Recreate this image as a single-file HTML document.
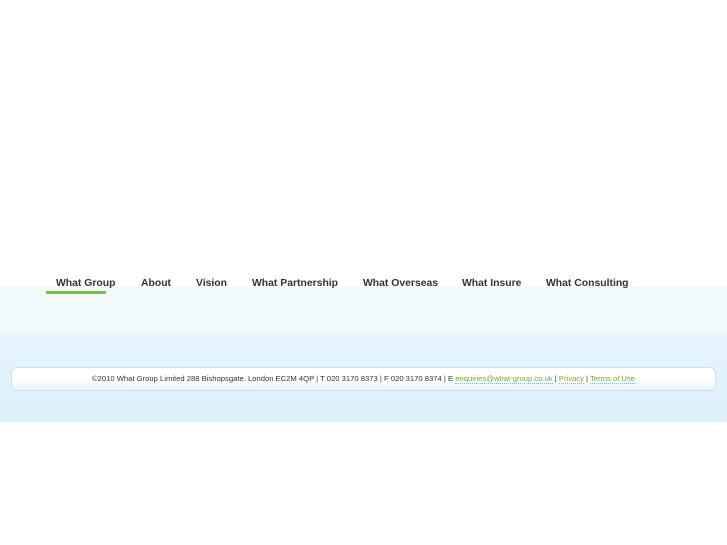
<!DOCTYPE html>
<html><head><style>
body{margin:0;width:727px;height:545px;background:#fff;font-family:"Liberation Sans",Arial,sans-serif;position:relative;overflow:hidden}
.band{position:absolute;left:0;top:287px;width:727px;height:135px;background:linear-gradient(#f2f9fd 0,#f2f9fd 47px,#e6f5fd 48px,#dbeffc 135px)}
.nav a{position:absolute;top:278px;font-size:10.4px;font-weight:bold;color:#333;text-decoration:none;white-space:nowrap}
.ul{position:absolute;left:46px;top:291px;width:60px;height:3px;background:#7cc242}
.foot{position:absolute;left:11px;top:367px;width:703px;height:22px;border:1px solid #c9e2f0;border-radius:6px;background:linear-gradient(#fff 0,#fff 55%,#e8f5fc 100%);font-size:7.65px;color:#333;text-align:center;line-height:22px;white-space:nowrap}
.foot span{color:#7aa62e;border-bottom:1px dotted #7cc0e0}
</style></head><body>
<div class="band"></div>
<div class="nav">
<a style="left:56px">What Group</a>
<a style="left:141px">About</a>
<a style="left:196px">Vision</a>
<a style="left:252px">What Partnership</a>
<a style="left:363px">What Overseas</a>
<a style="left:462px">What Insure</a>
<a style="left:546px">What Consulting</a>
</div>
<div class="ul"></div>
<div class="foot">©2010 What Group Limited 288 Bishopsgate. London EC2M 4QP | T 020 3170 8373 | F 020 3170 8374 | E <span>enquiries@what-group.co.uk</span> | <span>Privacy</span> | <span>Terms of Use</span></div>
</body></html>
